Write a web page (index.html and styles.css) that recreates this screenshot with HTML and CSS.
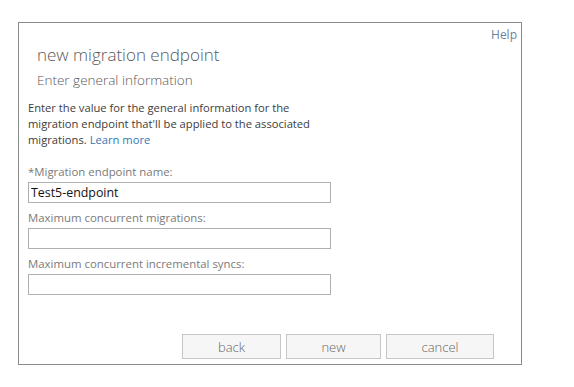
FILE: index.html
```html
<!DOCTYPE html>
<html lang="en">

<head>
    <meta charset="utf-8">
    <title>new migration endpoint</title>
    <link rel="stylesheet" href="styles.css">
</head>

<body>
    <div class="dialog">
        <div class="help-row">
            <a class="help" href="#">Help</a>
        </div>
        <div class="header">
            <h1 class="title">new migration endpoint</h1>
            <h2 class="subtitle">Enter general information</h2>
        </div>
        <div class="content">
            <p class="intro">Enter the value for the general information for the migration endpoint that'll be applied to the associated migrations. <a class="link" href="#">Learn more</a></p>
            <div class="field">
                <label class="label">*Migration endpoint name:</label>
                <input class="input" type="text" value="Test5-endpoint">
            </div>
            <div class="field">
                <label class="label">Maximum concurrent migrations:</label>
                <input class="input" type="text">
            </div>
            <div class="field">
                <label class="label">Maximum concurrent incremental syncs:</label>
                <input class="input" type="text">
            </div>
        </div>
        <div class="buttons">
            <button class="btn btn-back">back</button>
            <button class="btn btn-new">new</button>
            <button class="btn btn-cancel">cancel</button>
        </div>
    </div>
</body>

</html>
```

FILE: styles.css
```css
body {
    margin: 0;
    background: #fff;
    font-family: "Open Sans", "Noto Sans", sans-serif;
    color: #333;
}

.dialog {
    display: flex;
    flex-direction: column;
    box-sizing: border-box;
    width: 504px;
    height: 343px;
    margin: 22px 0 0 18px;
    border: 1px solid #8a8a8a;
}

.help-row {
    height: 19px;
    padding: 2px 4px 0 0;
    box-sizing: border-box;
    text-align: right;
    line-height: 17px;
}

.help {
    font-size: 12px;
    color: #6a84a0;
    text-decoration: none;
}

.header {
    padding-left: 18px;
}

.title {
    margin: 0;
    font-size: 17px;
    font-weight: 300;
    line-height: 26px;
    color: #595959;
}

.subtitle {
    margin: 0;
    font-size: 13.5px;
    font-weight: 300;
    line-height: 24px;
    color: #595959;
}

.content {
    padding: 8px 9px 0;
}

.intro {
    margin: 0 0 14px;
    width: 300px;
    font-size: 11.2px;
    line-height: 16px;
    color: #3c3c3c;
}

.link {
    color: #3577b5;
    text-decoration: none;
}

.field {
    display: flex;
    flex-direction: column;
    margin-bottom: 5px;
}

.label {
    font-size: 11.4px;
    line-height: 20px;
    color: #7a7a7a;
}

.input {
    box-sizing: border-box;
    width: 303px;
    height: 21px;
    margin: 0;
    padding: 0 2px;
    border: 1px solid #b0b0b0;
    font-family: inherit;
    font-size: 12.4px;
    color: #111;
}

.buttons {
    display: flex;
    justify-content: flex-end;
    gap: 5px;
    margin-top: auto;
    padding: 0 27px 5px 0;
}

.btn {
    height: 25px;
    border: 1px solid #c6c6c6;
    background: #f6f6f6;
    font-family: inherit;
    font-size: 13px;
    font-weight: 300;
    color: #666;
}

.btn-back {
    width: 99px;
}

.btn-new {
    width: 95px;
}

.btn-cancel {
    width: 108px;
}
```
